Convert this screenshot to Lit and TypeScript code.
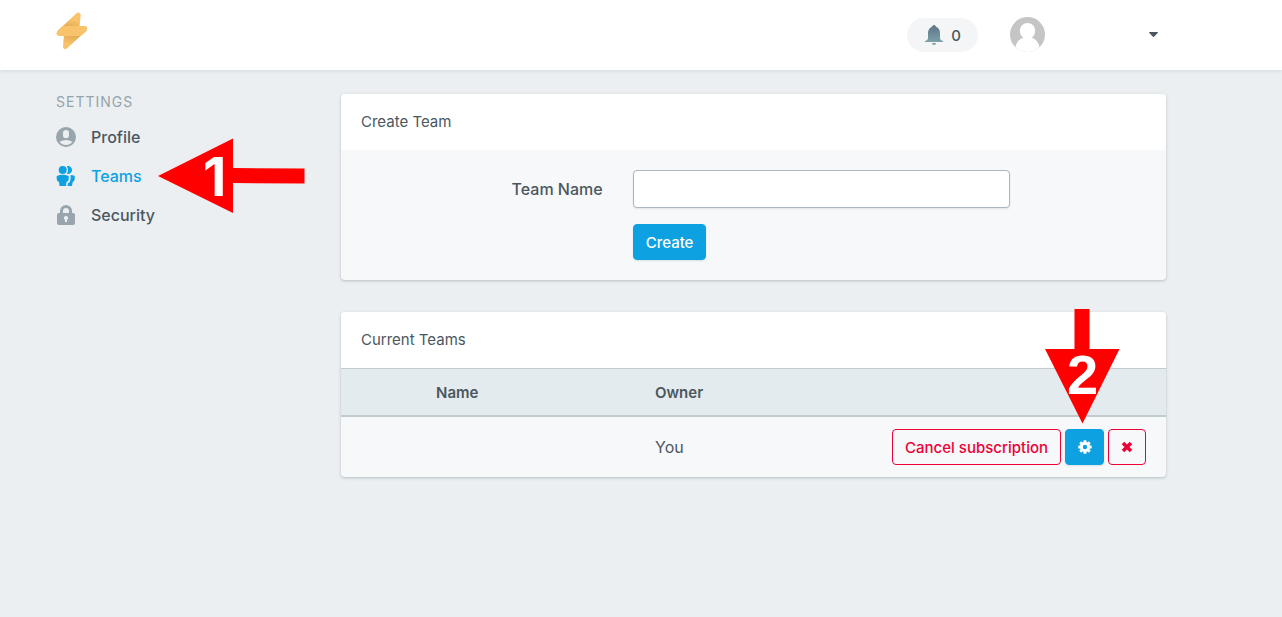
import { LitElement, html, css, svg } from "lit";
import { customElement, property } from "lit/decorators.js";

const gearTeeth = [0, 45, 90, 135, 180, 225, 270, 315];

@customElement("app-header")
class AppHeader extends LitElement {
  static styles = css`
    :host { display: block; }
    header {
      display: flex;
      align-items: center;
      height: 70px;
      box-sizing: border-box;
      padding: 0 124px 0 56px;
      background: #fff;
      box-shadow: 0 1px 4px rgba(60, 75, 95, 0.14);
    }
    svg { display: block; }
    button {
      font: inherit;
      color: inherit;
      border: 0;
      background: none;
      padding: 0;
      cursor: pointer;
    }
    .brand { margin-bottom: 8px; }
    .right {
      display: flex;
      align-items: center;
      gap: 32px;
      margin-left: auto;
    }
    .pill {
      display: flex;
      align-items: center;
      gap: 8px;
      height: 34px;
      box-sizing: border-box;
      padding: 0 17px 0 18px;
      border-radius: 17px;
      background: #f3f5f7;
      font-size: 15px;
      font-weight: 500;
    }
    .count { padding-top: 2px; }
    .user {
      display: flex;
      align-items: center;
      justify-content: space-between;
      width: 148px;
      margin-bottom: 2px;
    }
  `;
  render() {
    return html`
      <header>
        <a class="brand" href="#" aria-label="Home">
          <svg width="32" height="38" viewBox="0 0 32 38">
            <defs>
              <linearGradient id="top" x1="0.7" y1="0.1" x2="0.45" y2="1">
                <stop offset="0.3" stop-color="#f8c36b" />
                <stop offset="1" stop-color="#d6a046" />
              </linearGradient>
              <linearGradient id="low" x1="0.6" y1="0" x2="0.4" y2="0.8">
                <stop offset="0" stop-color="#d6a046" />
                <stop offset="1" stop-color="#f8c36b" />
              </linearGradient>
            </defs>
            <path fill="url(#top)" d="M1 19.500L20.500 1.300Q22 0 23.500 1Q25 2 24.700 3.500L23.300 16Z" />
            <path fill="url(#low)" d="M8 22L7 34.500Q7 36.500 8.500 37Q10 37.300 11.500 36L30.500 18.500Z" />
            <path fill="#f8c36b" d="M6.500 14H29.500Q31.300 14.500 31.300 16.500Q31.300 18.200 30 19.300L26 23Q25 24 23.500 24H3Q0.500 23.700 0.500 21.500Q0.500 20 1.500 19Z" />
          </svg>
        </a>
        <div class="right">
          <button class="pill">
            <svg width="18" height="20" viewBox="0 0 18 20">
              <defs>
                <linearGradient id="bell" x1="0" y1="0" x2="0" y2="1">
                  <stop offset="0" stop-color="#5c7488" />
                  <stop offset="1" stop-color="#7c9fa8" />
                </linearGradient>
              </defs>
              <path fill="url(#bell)" d="M7 1.700Q7.500 0 9 0Q10.500 0 11 1.700Q15 3.400 15 8V13.500Q15.500 15.500 18 16V17H0V16Q2.500 15.500 3 13.500V8Q3 3.400 7 1.700Z" />
              <path fill="#7c9fa8" d="M7 18H11Q11 20 9 20Q7 20 7 18Z" />
            </svg>
            <span class="count">0</span>
          </button>
          <button class="user" aria-label="Account menu">
            <svg width="35" height="35" viewBox="0 0 35 35">
              <defs><clipPath id="round"><circle cx="17.500" cy="17.500" r="17.500" /></clipPath></defs>
              <g clip-path="url(#round)">
                <rect width="35" height="35" fill="#c5c5c5" />
                <ellipse cx="17.500" cy="14" rx="7.700" ry="8" fill="#fff" />
                <path fill="#fff" d="M14 20.500Q7 22.500 5.500 30L5 36H30L29.500 30Q28 22.500 21 20.500Z" />
              </g>
            </svg>
            <svg width="9" height="5" viewBox="0 0 9 5">
              <path fill="#4b5760" d="M0.600 0H8.400Q9.300 0.300 8.700 1L5 4.700Q4.500 5.100 4 4.700L0.300 1Q-0.300 0.300 0.600 0Z" />
            </svg>
          </button>
        </div>
      </header>
    `;
  }
}

@customElement("settings-nav")
class SettingsNav extends LitElement {
  static styles = css`
    :host { display: block; }
    h2 {
      margin: 0 0 5px;
      font-size: 14px;
      line-height: 20px;
      font-weight: 400;
      letter-spacing: 1px;
      text-transform: uppercase;
      color: #95a3ab;
    }
    ul { list-style: none; margin: 0; padding: 0; }
    a {
      position: relative;
      display: flex;
      align-items: center;
      gap: 15px;
      width: max-content;
      height: 39px;
      font-size: 16px;
      font-weight: 500;
      color: #4b5760;
      fill: #98a5ac;
      text-decoration: none;
    }
    a.active { color: #0da1e2; fill: #0da1e2; }
    .marker {
      position: absolute;
      left: calc(100% + 16px);
      top: -18px;
    }
    .digit {
      font-family: Inter, sans-serif;
      font-size: 54px;
      font-weight: 700;
      fill: #fff;
    }
  `;
  render() {
    return html`
      <h2>Settings</h2>
      <nav>
        <ul>
          <li>
            <a href="#profile">
              <svg width="20" height="20" viewBox="0 0 20 20">
                <path fill-rule="evenodd" d="M10 0A10 10 0 1 0 10 20A10 10 0 0 0 10 0ZM7 6Q7 3 10 3Q13 3 13 6V8Q13 11.200 10 11.200Q7 11.200 7 8ZM3.600 14.700Q6.500 12.900 10 12.900Q13.500 12.900 16.400 14.700Q14 18 10 18Q6 18 3.600 14.700Z" />
              </svg>
              <span>Profile</span>
            </a>
          </li>
          <li>
            <a class="active" href="#teams" aria-current="page">
              <svg width="20" height="20" viewBox="0 0 20 20">
                <circle cx="6.700" cy="4" r="4" />
                <path d="M0.700 10Q6.700 7.500 12.700 10V13Q12.500 15.500 10.500 16L10 20H3.500L3 16Q0.900 15.500 0.700 13Z" />
                <path d="M10.800 0.200A4 4 0 1 1 10.800 7.800Q13.300 4 10.800 0.200Z" />
                <path d="M14.600 9Q17 9 18.700 10V13Q18.500 15.500 16.700 16L16 20H11.500L12 17.300Q14.600 16 14.600 13Z" />
              </svg>
              <span>Teams</span>
              <svg class="marker" width="147" height="76" viewBox="0 0 147 76" aria-hidden="true">
                <path fill="#f00" d="M0 38L75 0.500V30L146.500 30.500V45.500L75 45V75Z" />
                <text class="digit" x="45" y="58">1</text>
              </svg>
            </a>
          </li>
          <li>
            <a href="#security">
              <svg width="20" height="20" viewBox="0 0 20 20">
                <path fill-rule="evenodd" d="M4 8V6A6 6 0 0 1 16 6V8H17Q19 8 19 10V18Q19 20 17 20H3Q1 20 1 18V10Q1 8 3 8ZM7 8H13V6A3 3 0 0 0 7 6ZM9 14.700V17H11V14.700A2 2 0 1 0 9 14.700Z" />
              </svg>
              <span>Security</span>
            </a>
          </li>
        </ul>
      </nav>
    `;
  }
}

@customElement("settings-card")
class SettingsCard extends LitElement {
  @property() heading = "";
  static styles = css`
    :host {
      display: block;
      border-radius: 4px;
      background: #f7f8fa;
      box-shadow: 0 1px 3px rgba(60, 75, 85, 0.3);
    }
    h3 {
      margin: 0;
      padding: 16px 20px;
      border-radius: 4px 4px 0 0;
      background: #fff;
      font-size: 15px;
      line-height: 24px;
      font-weight: 400;
    }
  `;
  render() {
    return html`<h3>${this.heading}</h3><slot></slot>`;
  }
}

@customElement("app-root")
class AppRoot extends LitElement {
  static styles = css`
    :host {
      display: block;
      min-height: 100vh;
      background: #ebeff2;
      color: #4b5760;
      font-family: Inter, Roboto, sans-serif;
      font-size: 16px;
      line-height: 24px;
    }
    .layout {
      display: grid;
      grid-template-columns: 1fr 3fr;
      padding: 24px 101px 0 41px;
    }
    settings-nav { margin: -2px 15px 0; }
    main {
      display: grid;
      gap: 32px;
      padding: 0 15px;
    }
    .form {
      display: grid;
      grid-template-columns: 4fr 6fr 2fr;
      row-gap: 16px;
      padding: 20px 5px;
      align-items: center;
    }
    label {
      padding: 0 15px;
      text-align: right;
      font-weight: 500;
    }
    .field { padding: 0 15px; }
    .submit { grid-column: 2; }
    input {
      display: block;
      width: 100%;
      height: 38px;
      box-sizing: border-box;
      padding: 6px 12px;
      border: 1px solid #abb7be;
      border-radius: 4px;
      background: #fff;
      font: inherit;
      color: inherit;
      box-shadow: 0 1px 2px rgba(60, 75, 85, 0.12);
    }
    button {
      display: inline-flex;
      align-items: center;
      justify-content: center;
      height: 36px;
      box-sizing: border-box;
      padding: 0 12px;
      border: 1px solid #0da1e2;
      border-radius: 4px;
      background: #0da1e2;
      color: #fff;
      font-family: inherit;
      font-size: 15px;
      font-weight: 500;
      box-shadow: 0 1px 2px rgba(60, 75, 85, 0.14);
      cursor: pointer;
    }
    button.danger {
      border-color: #ed0037;
      background: #fff0;
      color: #ed0037;
      box-shadow: none;
    }
    table {
      width: 100%;
      border-collapse: separate;
      border-spacing: 0;
      table-layout: fixed;
      text-align: left;
    }
    th {
      padding: 13px 0 11px;
      border-top: 1px solid #c2cbd0;
      border-bottom: 2px solid #c2cbd0;
      background: #e4ebee;
      font-size: 15px;
      line-height: 22px;
      height: 22px;
      font-weight: 600;
    }
    td { padding: 12px 0; }
    .pic { width: 95px; }
    .name, .owner { width: 219px; }
    .actions {
      display: flex;
      justify-content: flex-end;
      gap: 4px;
      padding-right: 20px;
    }
    .gear { position: relative; width: 39px; padding: 0; }
    .remove { width: 38px; padding: 0; }
    .marker {
      position: absolute;
      left: -21px;
      bottom: 40px;
    }
    .digit {
      font-family: "Liberation Sans", Arial, sans-serif;
      font-size: 56px;
      font-weight: 700;
      fill: #fff;
    }
  `;
  render() {
    return html`
      <app-header></app-header>
      <div class="layout">
        <settings-nav></settings-nav>
        <main>
          <settings-card heading="Create Team">
            <form class="form" @submit=${(e: Event) => e.preventDefault()}>
              <label for="team">Team Name</label>
              <div class="field"><input id="team" type="text" /></div>
              <div class="field submit"><button type="submit">Create</button></div>
            </form>
          </settings-card>
          <settings-card heading="Current Teams">
            <table>
              <thead>
                <tr>
                  <th class="pic"></th>
                  <th class="name">Name</th>
                  <th class="owner">Owner</th>
                  <th></th>
                </tr>
              </thead>
              <tbody>
                <tr>
                  <td></td>
                  <td></td>
                  <td>You</td>
                  <td class="actions">
                    <button class="danger">Cancel subscription</button>
                    <button class="gear" aria-label="Team settings">
                      <svg width="14" height="14" viewBox="-7 -7 14 14">
                        ${gearTeeth.map((a) => svg`<rect x="-1.500" y="-6.700" width="3" height="4" rx="0.500" fill="#fff" transform="rotate(${a})" />`)}
                        <circle r="3.600" fill="none" stroke="#fff" stroke-width="2.800" />
                      </svg>
                      <svg class="marker" width="76" height="115" viewBox="0 0 76 115" aria-hidden="true">
                        <path fill="#f00" d="M29.500 0H44.500V40H74.500L37.500 114.500L0 40H29.500Z" />
                        <text class="digit" x="22" y="85">2</text>
                      </svg>
                    </button>
                    <button class="danger remove" aria-label="Delete team">
                      <svg width="12" height="12" viewBox="0 0 12 12">
                        <path fill="none" stroke="#ed0037" stroke-width="3.600" stroke-linejoin="round" d="M2 2L10 10M10 2L2 10" />
                      </svg>
                    </button>
                  </td>
                </tr>
              </tbody>
            </table>
          </settings-card>
        </main>
      </div>
    `;
  }
}
